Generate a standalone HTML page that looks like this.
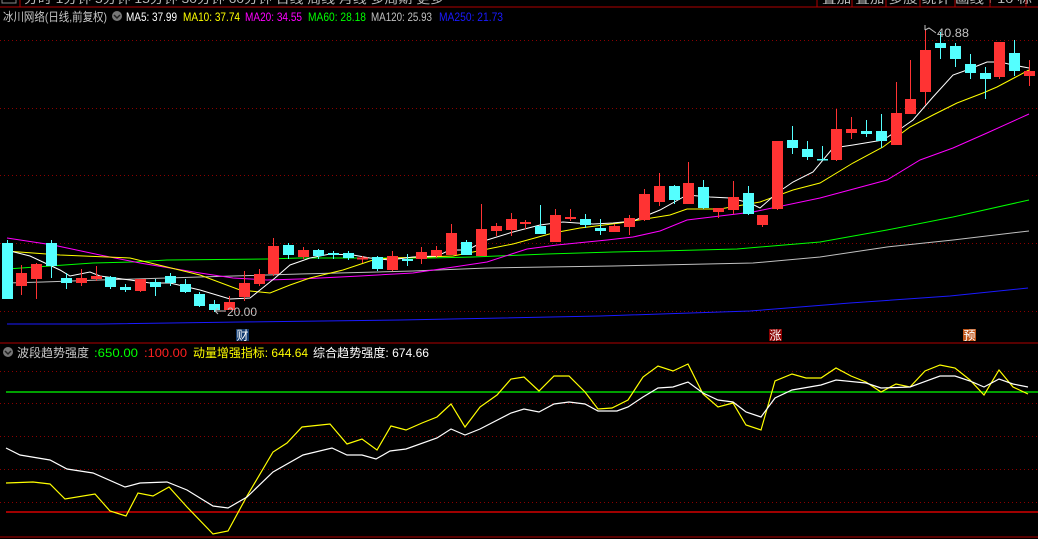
<!DOCTYPE html>
<html><head><meta charset="utf-8"><style>
html,body{margin:0;padding:0;background:#000;width:1038px;height:539px;overflow:hidden}
svg{display:block}
text{font-family:"Liberation Sans","Noto Sans CJK SC",sans-serif;font-size:12px}
</style></head><body>
<svg width="1038" height="539" viewBox="0 0 1038 539" xmlns="http://www.w3.org/2000/svg">
<rect width="1038" height="539" fill="#000"/>
<defs><clipPath id="topc"><rect x="0" y="0" width="1038" height="6"/></clipPath></defs>
<g clip-path="url(#topc)" fill="#bbb">
<text x="24" y="3" textLength="420" lengthAdjust="spacingAndGlyphs">分时 1分钟 5分钟 15分钟 30分钟 60分钟 日线 周线 月线 多周期 更多</text>
<text x="822" y="3" textLength="210" lengthAdjust="spacingAndGlyphs">叠加 叠加 多股 统计 画线 F10 标</text>
<rect x="2" y="-3" width="14" height="6" fill="none" stroke="#888"/>
</g>
<line x1="0" y1="7" x2="1038" y2="7" stroke="#b00000"/>
<line x1="20" y1="0" x2="20" y2="7" stroke="#b00000"/>
<g stroke="#b00000"><line x1="817" y1="0" x2="817" y2="7"/><line x1="852" y1="0" x2="852" y2="7"/><line x1="886" y1="0" x2="886" y2="7"/><line x1="920" y1="0" x2="920" y2="7"/><line x1="955" y1="0" x2="955" y2="7"/><line x1="990" y1="0" x2="990" y2="7"/><line x1="1026" y1="0" x2="1026" y2="7"/></g>

<text x="3" y="21" fill="#c8c8c8" textLength="104" lengthAdjust="spacingAndGlyphs">冰川网络(日线,前复权)</text>
<circle cx="117" cy="16" r="5" fill="#777"/>
<path d="M114 15 L117 18 L120 15" stroke="#222" stroke-width="1.5" fill="none"/>
<text x="126" y="21" fill="#fff" textLength="51" lengthAdjust="spacingAndGlyphs">MA5: 37.99</text>
<text x="183" y="21" fill="#ffff00" textLength="57" lengthAdjust="spacingAndGlyphs">MA10: 37.74</text>
<text x="245" y="21" fill="#ff00ff" textLength="57" lengthAdjust="spacingAndGlyphs">MA20: 34.55</text>
<text x="308" y="21" fill="#00ff00" textLength="58" lengthAdjust="spacingAndGlyphs">MA60: 28.18</text>
<text x="371" y="21" fill="#c0c0c0" textLength="61" lengthAdjust="spacingAndGlyphs">MA120: 25.93</text>
<text x="439" y="21" fill="#1a1aff" textLength="64" lengthAdjust="spacingAndGlyphs">MA250: 21.73</text>

<g stroke="#8a0000" stroke-dasharray="1 3">
<line x1="0" y1="40.5" x2="1038" y2="40.5"/><line x1="0" y1="108.5" x2="1038" y2="108.5"/><line x1="0" y1="175.5" x2="1038" y2="175.5"/><line x1="0" y1="243.5" x2="1038" y2="243.5"/><line x1="0" y1="311.5" x2="1038" y2="311.5"/>
<line x1="0" y1="371.5" x2="1038" y2="371.5"/><line x1="0" y1="403.5" x2="1038" y2="403.5"/><line x1="0" y1="436.5" x2="1038" y2="436.5"/><line x1="0" y1="469.5" x2="1038" y2="469.5"/><line x1="0" y1="502.5" x2="1038" y2="502.5"/>
</g>

<g fill="none" stroke-width="1">
<polyline stroke="#1a1aff" points="7,324 100,324 240,322 400,320 600,316 750,311 850,303 950,296 1028,288"/>
<polyline stroke="#c0c0c0" points="7,283 43,282 100,280 167,278 233,276 300,274 413,271 487,268 547,267 613,266 660,265 753,263 820,257 887,247 953,240 1029,231"/>
<polyline stroke="#00ff00" points="7,269 50,266 93,263 133,262 167,260 267,259 300,258 430,258 473,257 547,254 613,252 660,251 737,249 820,242 887,230 953,217 1029,200"/>
<polyline stroke="#ff00ff" points="7,238 53,245 100,255 140,263 200,273 233,278 267,280 300,279 360,276 413,273 447,268 487,262 527,249 557,245 607,240 633,237 660,231 687,220 753,212 820,198 887,180 920,160 953,148 987,133 1029,114"/>
<polyline stroke="#ffff00" points="6,251 60,255 130,258 200,275 240,290 270,293 290,285 310,278 343,270 373,260 390,258 427,257 453,256 473,252 513,244 553,233 580,228 620,223 670,215 687,209 720,209 760,202 793,190 820,183 853,163 883,147 910,127 933,115 957,103 983,93 997,87 1029,70"/>
<polyline stroke="#ffffff" points="6,250 30,256 60,270 70,276 90,272 100,276 130,280 150,283 170,283 200,290 230,299 250,298 260,290 275,278 290,265 310,258 330,254 353,255 370,258 390,260 413,257 437,256 450,250 467,250 487,240 513,232 540,225 563,222 577,223 593,224 613,223 633,221 660,210 687,195 710,197 730,198 750,203 760,208 777,193 793,182 813,172 833,148 853,145 883,140 903,127 913,120 933,97 953,75 967,70 987,62 1000,62 1013,65 1029,68"/>
</g>

<g>
<g stroke="#54ffff" fill="#54ffff">
<line x1="7.5" y1="240" x2="7.5" y2="299"/><rect x="2" y="243" width="11" height="56" stroke="none"/>
<line x1="51.5" y1="240" x2="51.5" y2="278"/><rect x="46" y="243" width="11" height="23" stroke="none"/>
<line x1="66.5" y1="273" x2="66.5" y2="289"/><rect x="61" y="278" width="11" height="5" stroke="none"/>
<line x1="110.5" y1="276" x2="110.5" y2="289"/><rect x="105" y="277" width="11" height="10" stroke="none"/>
<line x1="125.5" y1="284" x2="125.5" y2="292"/><rect x="120" y="287" width="11" height="3" stroke="none"/>
<line x1="155.5" y1="279" x2="155.5" y2="296"/><rect x="150" y="282" width="11" height="5" stroke="none"/>
<line x1="170.5" y1="273" x2="170.5" y2="286"/><rect x="165" y="276" width="11" height="7" stroke="none"/>
<line x1="185.5" y1="279" x2="185.5" y2="293"/><rect x="180" y="284" width="11" height="8" stroke="none"/>
<line x1="199.5" y1="292" x2="199.5" y2="307"/><rect x="194" y="294" width="11" height="12" stroke="none"/>
<line x1="214.5" y1="300" x2="214.5" y2="312"/><rect x="209" y="304" width="11" height="6" stroke="none"/>
<line x1="288.5" y1="243" x2="288.5" y2="259"/><rect x="283" y="245" width="11" height="10" stroke="none"/>
<line x1="318.5" y1="249" x2="318.5" y2="259"/><rect x="313" y="250" width="11" height="6" stroke="none"/>
<line x1="333.5" y1="251" x2="333.5" y2="259"/><rect x="328" y="253" width="11" height="2" stroke="none"/>
<line x1="348.5" y1="251" x2="348.5" y2="260"/><rect x="343" y="253" width="11" height="5" stroke="none"/>
<line x1="377.5" y1="256" x2="377.5" y2="271"/><rect x="372" y="257" width="11" height="12" stroke="none"/>
<line x1="407.5" y1="254" x2="407.5" y2="266"/><rect x="402" y="259" width="11" height="2" stroke="none"/>
<line x1="466.5" y1="240" x2="466.5" y2="255"/><rect x="461" y="242" width="11" height="13" stroke="none"/>
<line x1="540.5" y1="205" x2="540.5" y2="234"/><rect x="535" y="226" width="11" height="8" stroke="none"/>
<line x1="585.5" y1="214" x2="585.5" y2="228"/><rect x="580" y="219" width="11" height="6" stroke="none"/>
<line x1="600.5" y1="219" x2="600.5" y2="235"/><rect x="595" y="228" width="11" height="3" stroke="none"/>
<line x1="674.5" y1="185" x2="674.5" y2="204"/><rect x="669" y="186" width="11" height="14" stroke="none"/>
<line x1="703.5" y1="180" x2="703.5" y2="209"/><rect x="698" y="187" width="11" height="21" stroke="none"/>
<line x1="748.5" y1="186" x2="748.5" y2="215"/><rect x="743" y="193" width="11" height="21" stroke="none"/>
<line x1="792.5" y1="126" x2="792.5" y2="154"/><rect x="787" y="140" width="11" height="8" stroke="none"/>
<line x1="807.5" y1="141" x2="807.5" y2="160"/><rect x="802" y="149" width="11" height="8" stroke="none"/>
<line x1="822.5" y1="146" x2="822.5" y2="160"/><rect x="817" y="159" width="11" height="1.5" stroke="none"/>
<line x1="866.5" y1="120" x2="866.5" y2="137"/><rect x="861" y="131" width="11" height="3" stroke="none"/>
<line x1="881.5" y1="114" x2="881.5" y2="148"/><rect x="876" y="131" width="11" height="10" stroke="none"/>
<line x1="940.5" y1="32" x2="940.5" y2="59"/><rect x="935" y="43" width="11" height="5" stroke="none"/>
<line x1="955.5" y1="43" x2="955.5" y2="67"/><rect x="950" y="46" width="11" height="13" stroke="none"/>
<line x1="970.5" y1="54" x2="970.5" y2="79"/><rect x="965" y="64" width="11" height="9" stroke="none"/>
<line x1="985.5" y1="67" x2="985.5" y2="99"/><rect x="980" y="73" width="11" height="6" stroke="none"/>
<line x1="1014.5" y1="40" x2="1014.5" y2="76"/><rect x="1009" y="53" width="11" height="18" stroke="none"/>
</g>
<g stroke="#ff3333" fill="#ff3333">
<line x1="21.5" y1="265" x2="21.5" y2="295"/><rect x="16" y="273" width="11" height="13" stroke="none"/>
<line x1="36.5" y1="263" x2="36.5" y2="299"/><rect x="31" y="264" width="11" height="15" stroke="none"/>
<line x1="81.5" y1="269" x2="81.5" y2="286"/><rect x="76" y="278" width="11" height="5" stroke="none"/>
<line x1="96.5" y1="266" x2="96.5" y2="281"/><rect x="91" y="276" width="11" height="3" stroke="none"/>
<line x1="140.5" y1="279" x2="140.5" y2="292"/><rect x="135" y="279" width="11" height="12" stroke="none"/>
<line x1="229.5" y1="296" x2="229.5" y2="310"/><rect x="224" y="302" width="11" height="8" stroke="none"/>
<line x1="244.5" y1="271" x2="244.5" y2="301"/><rect x="239" y="283" width="11" height="14" stroke="none"/>
<line x1="259.5" y1="269" x2="259.5" y2="286"/><rect x="254" y="274" width="11" height="10" stroke="none"/>
<line x1="273.5" y1="238" x2="273.5" y2="276"/><rect x="268" y="246" width="11" height="28" stroke="none"/>
<line x1="303.5" y1="247" x2="303.5" y2="259"/><rect x="298" y="250" width="11" height="7" stroke="none"/>
<line x1="362.5" y1="256" x2="362.5" y2="263"/><rect x="357" y="257.5" width="11" height="2" stroke="none"/>
<line x1="392.5" y1="251" x2="392.5" y2="271"/><rect x="387" y="256" width="11" height="14" stroke="none"/>
<line x1="421.5" y1="247" x2="421.5" y2="264"/><rect x="416" y="252" width="11" height="7" stroke="none"/>
<line x1="436.5" y1="246" x2="436.5" y2="258"/><rect x="431" y="250" width="11" height="6" stroke="none"/>
<line x1="451.5" y1="224" x2="451.5" y2="255"/><rect x="446" y="233" width="11" height="22" stroke="none"/>
<line x1="481.5" y1="204" x2="481.5" y2="256"/><rect x="476" y="229" width="11" height="27" stroke="none"/>
<line x1="496.5" y1="223" x2="496.5" y2="236"/><rect x="491" y="226" width="11" height="5" stroke="none"/>
<line x1="511.5" y1="213" x2="511.5" y2="236"/><rect x="506" y="219" width="11" height="11" stroke="none"/>
<line x1="525.5" y1="220" x2="525.5" y2="229"/><rect x="520" y="222" width="11" height="2" stroke="none"/>
<line x1="555.5" y1="209" x2="555.5" y2="242"/><rect x="550" y="215" width="11" height="27" stroke="none"/>
<line x1="570.5" y1="209" x2="570.5" y2="221"/><rect x="565" y="217" width="11" height="2" stroke="none"/>
<line x1="614.5" y1="224" x2="614.5" y2="232"/><rect x="609" y="226" width="11" height="6" stroke="none"/>
<line x1="629.5" y1="215" x2="629.5" y2="235"/><rect x="624" y="218" width="11" height="9" stroke="none"/>
<line x1="644.5" y1="189" x2="644.5" y2="221"/><rect x="639" y="194" width="11" height="26" stroke="none"/>
<line x1="659.5" y1="173" x2="659.5" y2="206"/><rect x="654" y="186" width="11" height="16" stroke="none"/>
<line x1="688.5" y1="162" x2="688.5" y2="204"/><rect x="683" y="183" width="11" height="21" stroke="none"/>
<line x1="718.5" y1="208" x2="718.5" y2="218"/><rect x="713" y="208" width="11" height="4" stroke="none"/>
<line x1="733.5" y1="181" x2="733.5" y2="214"/><rect x="728" y="197" width="11" height="13" stroke="none"/>
<line x1="762.5" y1="215" x2="762.5" y2="227"/><rect x="757" y="215" width="11" height="10" stroke="none"/>
<line x1="777.5" y1="141" x2="777.5" y2="210"/><rect x="772" y="141" width="11" height="68" stroke="none"/>
<line x1="836.5" y1="109" x2="836.5" y2="161"/><rect x="831" y="129" width="11" height="31" stroke="none"/>
<line x1="851.5" y1="117" x2="851.5" y2="139"/><rect x="846" y="129" width="11" height="4" stroke="none"/>
<line x1="896.5" y1="82" x2="896.5" y2="145"/><rect x="891" y="113" width="11" height="32" stroke="none"/>
<line x1="910.5" y1="60" x2="910.5" y2="114"/><rect x="905" y="99" width="11" height="15" stroke="none"/>
<line x1="925.5" y1="29" x2="925.5" y2="105"/><rect x="920" y="50" width="11" height="42" stroke="none"/>
<line x1="999.5" y1="42" x2="999.5" y2="79"/><rect x="994" y="42" width="11" height="35" stroke="none"/>
<line x1="1029.5" y1="60" x2="1029.5" y2="86"/><rect x="1024" y="71" width="11" height="5" stroke="none"/>
</g>
</g>

<path d="M925 30 L925 25 M925 30 L929 28 L936 33" stroke="#c0c0c0" fill="none"/>
<text x="937" y="37" fill="#c0c0c0" textLength="32" lengthAdjust="spacingAndGlyphs">40.88</text>
<path d="M215 311 L226 311 M215 311 L218 308 M215 311 L218 314" stroke="#c0c0c0" fill="none"/>
<text x="227" y="316" fill="#c0c0c0" textLength="30" lengthAdjust="spacingAndGlyphs">20.00</text>

<rect x="236" y="329" width="13" height="12" fill="#123a6e"/>
<text x="236.5" y="339.5" fill="#fff" font-size="11" textLength="12" lengthAdjust="spacingAndGlyphs">财</text>
<rect x="769" y="329" width="13" height="12" fill="#8a0000"/>
<text x="769.5" y="339.5" fill="#fff" font-size="11" textLength="12" lengthAdjust="spacingAndGlyphs">涨</text>
<rect x="963" y="329" width="13" height="12" fill="#c0561a"/>
<text x="963.5" y="339.5" fill="#fff" font-size="11" textLength="12" lengthAdjust="spacingAndGlyphs">预</text>

<line x1="0" y1="343" x2="1038" y2="343" stroke="#b00000"/>
<line x1="0" y1="537" x2="1038" y2="537" stroke="#b00000"/>

<circle cx="8" cy="352" r="5" fill="#777"/>
<path d="M5 351 L8 354 L11 351" stroke="#222" stroke-width="1.5" fill="none"/>
<text x="17" y="357" fill="#c8c8c8" textLength="72" lengthAdjust="spacingAndGlyphs">波段趋势强度</text>
<text x="94" y="357" fill="#00ff00" textLength="44" lengthAdjust="spacingAndGlyphs">:650.00</text>
<text x="144" y="357" fill="#ff2020" textLength="43" lengthAdjust="spacingAndGlyphs">:100.00</text>
<text x="193" y="357" fill="#ffff00" textLength="115" lengthAdjust="spacingAndGlyphs">动量增强指标: 644.64</text>
<text x="313" y="357" fill="#ffffff" textLength="116" lengthAdjust="spacingAndGlyphs">综合趋势强度: 674.66</text>

<line x1="6" y1="392" x2="1038" y2="392" stroke="#00ff00" stroke-width="1.3"/>
<line x1="6" y1="512" x2="1038" y2="512" stroke="#ff0000" stroke-width="1.3"/>
<g fill="none" stroke-width="1.2">
<polyline stroke="#ffff00" points="6,483 33,482 50,484 65,499 95,494 110,511 126,516 138,493 153,496 169,487 187,507 213,534 228,531 247,496 273,452 287,443 302,427 330,424 347,444 362,439 377,450 391,426 406,430 422,423 437,417 451,404 465,427 480,407 497,395 511,379 524,377 539,391 554,376 569,376 585,392 598,409 612,408 628,400 643,377 658,366 673,371 688,364 703,394 718,407 733,403 746,425 761,430 775,381 792,374 806,378 821,378 836,368 851,376 866,382 881,392 896,384 910,387 925,371 940,365 955,368 970,380 984,395 999,370 1013,387 1028,394"/>
<polyline stroke="#ffffff" points="6,448 20,455 50,460 67,469 93,473 125,487 140,483 167,482 187,490 213,506 228,508 247,497 273,472 303,455 332,448 347,455 362,455 376,459 390,451 406,449 437,438 451,429 465,435 480,429 511,413 524,409 539,412 554,404 569,402 585,404 598,411 617,411 628,407 643,397 658,388 673,387 688,382 703,393 718,400 733,402 746,412 761,417 775,398 792,390 821,385 836,380 866,383 881,388 910,387 940,376 955,376 970,381 984,387 999,379 1013,384 1028,387"/>
</g>
</svg>
</body></html>
